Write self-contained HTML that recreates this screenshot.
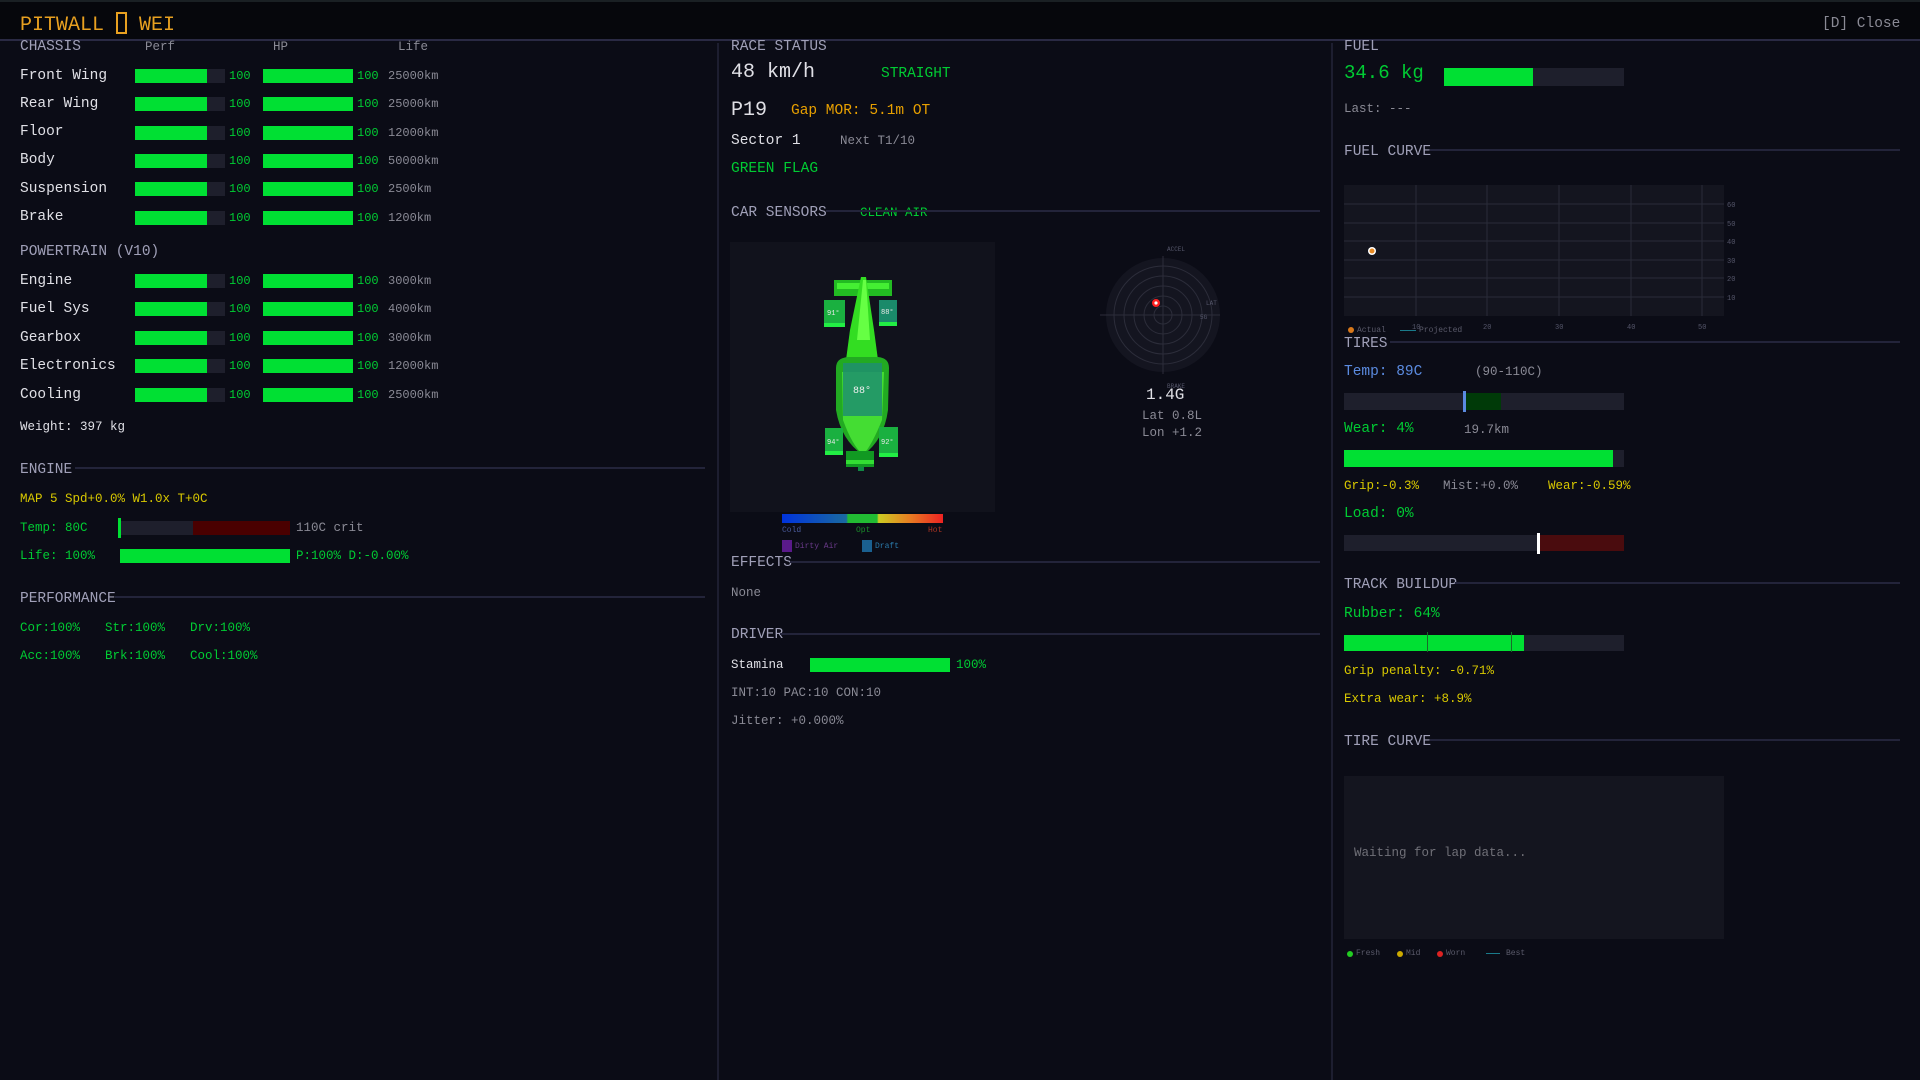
<!DOCTYPE html>
<html><head><meta charset="utf-8"><style>
*{margin:0;padding:0;box-sizing:border-box}
body{width:1920px;height:1080px;background:#0b0c16;font-family:"Liberation Mono",monospace;overflow:hidden;position:relative;color:#d0d0d8}
.t{position:absolute;white-space:nowrap;line-height:1}
.h{color:#a0a0b8;font-size:14.5px}
.g{color:#00cc33}.y{color:#d8c800}.gr{color:#8a8a95}.w{color:#e0e0e6}
.b{position:absolute;background:#1e1f2c}
.f{position:absolute;background:#00e033}
.ln{position:absolute;height:2px;background:#23243a}
</style></head><body>
<div style="position:absolute;left:0;top:0;width:1920px;height:41px;background:#06070c;border-bottom:2px solid #2a2a44"></div>
<div style="position:absolute;left:0;top:0;width:1920px;height:2px;background:#1a2024"></div>
<div class="t" style="left:20px;top:12px;font-size:20px;color:#e8a020">PITWALL <span style="display:inline-block;width:11px;height:22px;border:2px solid #e8a020;vertical-align:-4px"></span> WEI</div>
<div class="t gr" style="left:1822px;top:17px;font-size:14.5px">[D] Close</div>
<div style="position:absolute;left:717px;top:43px;width:2px;height:1037px;background:#1d1e30"></div>
<div style="position:absolute;left:1331px;top:43px;width:2px;height:1037px;background:#1d1e30"></div>

<!-- LEFT -->
<div class="t h" style="left:20px;top:40px">CHASSIS</div>
<div class="t gr" style="left:145px;top:41px;font-size:12.5px">Perf</div>
<div class="t gr" style="left:273px;top:41px;font-size:12.5px">HP</div>
<div class="t gr" style="left:398px;top:41px;font-size:12.5px">Life</div>

<div id="rows"></div>

<div class="t h" style="left:20px;top:245px">POWERTRAIN (V10)</div>
<div class="t w" style="left:20px;top:421px;font-size:12.5px">Weight: 397 kg</div>

<div class="t h" style="left:20px;top:463px">ENGINE</div><div class="ln" style="left:75px;top:467px;width:630px"></div>
<div class="t y" style="left:20px;top:493px;font-size:12.5px">MAP 5  Spd+0.0%  W1.0x  T+0C</div>
<div class="t g" style="left:20px;top:522px;font-size:12.5px">Temp: 80C</div>
<div class="b" style="left:119px;top:521px;width:171px;height:14px"></div>
<div style="position:absolute;left:193px;top:521px;width:97px;height:14px;background:#4a0000"></div>
<div class="f" style="left:118px;top:518px;width:3px;height:20px"></div>
<div class="t gr" style="left:296px;top:522px;font-size:12.5px">110C crit</div>
<div class="t g" style="left:20px;top:550px;font-size:12.5px">Life: 100%</div>
<div class="f" style="left:120px;top:549px;width:170px;height:14px"></div>
<div class="t g" style="left:296px;top:550px;font-size:12.5px">P:100% D:-0.00%</div>

<div class="t h" style="left:20px;top:592px">PERFORMANCE</div><div class="ln" style="left:115px;top:596px;width:590px"></div>
<div class="t g" style="left:20px;top:622px;font-size:12.5px">Cor:100%</div>
<div class="t g" style="left:105px;top:622px;font-size:12.5px">Str:100%</div>
<div class="t g" style="left:190px;top:622px;font-size:12.5px">Drv:100%</div>
<div class="t g" style="left:20px;top:650px;font-size:12.5px">Acc:100%</div>
<div class="t g" style="left:105px;top:650px;font-size:12.5px">Brk:100%</div>
<div class="t g" style="left:190px;top:650px;font-size:12.5px">Cool:100%</div>

<!-- CENTER -->
<div class="t h" style="left:731px;top:40px">RACE STATUS</div>
<div class="t w" style="left:731px;top:63px;font-size:20px">48 km/h</div>
<div class="t g" style="left:881px;top:67px;font-size:14.5px">STRAIGHT</div>
<div class="t w" style="left:731px;top:101px;font-size:20px">P19</div>
<div class="t" style="left:791px;top:104px;font-size:14.5px;color:#e8a000">Gap MOR: 5.1m OT</div>
<div class="t w" style="left:731px;top:134px;font-size:14.5px">Sector 1</div>
<div class="t gr" style="left:840px;top:135px;font-size:12.5px">Next T1/10</div>
<div class="t g" style="left:731px;top:162px;font-size:14.5px">GREEN FLAG</div>
<div class="t h" style="left:731px;top:206px">CAR SENSORS</div>
<div class="t g" style="left:860px;top:207px;font-size:12.5px">CLEAN AIR</div>
<div class="ln" style="left:826px;top:210px;width:494px"></div>

<div style="position:absolute;left:730px;top:242px;width:265px;height:270px;background:#11121c"></div>
<svg style="position:absolute;left:800px;top:260px" width="130" height="220" viewBox="800 260 130 220">
<rect x="834" y="280" width="58" height="16" fill="#22bb22"/>
<rect x="837" y="283" width="52" height="6" fill="#44ee33"/>
<path d="M861 277 L866 277 L874 330 L878 360 L846 360 L850 330 Z" fill="#33dd22"/>
<path d="M863 280 L866 280 L870 340 L857 340 Z" fill="#66ff44"/>
<path d="M836 368 Q836 358 848 357 L878 357 Q889 358 889 368 L888 410 Q884 440 863 455 Q841 440 836 410 Z" fill="#22aa22"/>
<path d="M842 372 L884 372 L882 420 Q872 445 863 455 Q852 445 843 420 Z" fill="#44dd33"/>
<rect x="843" y="363" width="39" height="53" fill="#1f8f6f" opacity="0.85"/>
<rect x="824" y="300" width="21" height="27" fill="#1ab040"/><rect x="824" y="323" width="21" height="4" fill="#22ee44"/>
<rect x="879" y="300" width="18" height="26" fill="#1a8a6a"/><rect x="879" y="322" width="18" height="4" fill="#22ee44"/>
<rect x="825" y="428" width="18" height="27" fill="#1ab040"/><rect x="825" y="451" width="18" height="4" fill="#22ee44"/>
<rect x="879" y="427" width="19" height="30" fill="#1ab040"/><rect x="879" y="453" width="19" height="4" fill="#22ee44"/>
<rect x="846" y="451" width="28" height="16" fill="#119922"/><rect x="846" y="460" width="28" height="4" fill="#33dd33"/>
<rect x="858" y="467" width="6" height="4" fill="#118844"/>
<g font-family="Liberation Mono,monospace" fill="#e8e8e8" font-size="7"><text x="827" y="315">91°</text><text x="881" y="314">88°</text><text x="827" y="444">94°</text><text x="881" y="444">92°</text></g>
<text x="853" y="393" font-family="Liberation Mono,monospace" font-size="10" fill="#eee">88°</text>
</svg>
<svg style="position:absolute;left:1100px;top:240px" width="140" height="150">
<circle cx="63" cy="75" r="57" fill="#141520"/>
<g fill="none" stroke="#2c2d3a" stroke-width="1"><circle cx="63" cy="75" r="49"/><circle cx="63" cy="75" r="39"/><circle cx="63" cy="75" r="29"/><circle cx="63" cy="75" r="19"/><circle cx="63" cy="75" r="9"/><line x1="63" y1="16" x2="63" y2="134"/><line x1="0" y1="75" x2="120" y2="75"/></g>
<circle cx="56" cy="63" r="4" fill="#ff2020"/><circle cx="56" cy="63" r="1.6" fill="#fff"/>
<g font-family="Liberation Mono,monospace" font-size="6" fill="#55566a"><text x="67" y="11">ACCEL</text><text x="67" y="148">BRAKE</text><text x="106" y="65">LAT</text><text x="100" y="79">5G</text></g>
</svg>
<div class="t w" style="left:1146px;top:387px;font-size:16px">1.4G</div>
<div class="t gr" style="left:1142px;top:410px;font-size:12.5px">Lat 0.8L</div>
<div class="t gr" style="left:1142px;top:427px;font-size:12.5px">Lon +1.2</div>
<div style="position:absolute;left:782px;top:514px;width:161px;height:9px;background:linear-gradient(90deg,#0033dd,#1a6aa0 40%,#22bb33 41%,#22bb33 59%,#cccc22 60%,#e87a22 80%,#ee2222)"></div>
<div class="t" style="left:782px;top:527px;font-size:8px;color:#4a5a9a">Cold</div>
<div class="t" style="left:856px;top:527px;font-size:8px;color:#1a8a2a">Opt</div>
<div class="t" style="left:928px;top:527px;font-size:8px;color:#aa3322">Hot</div>
<div style="position:absolute;left:782px;top:540px;width:10px;height:12px;background:#5a1a8a"></div>
<div class="t" style="left:795px;top:543px;font-size:8px;color:#6a3a8a">Dirty Air</div>
<div style="position:absolute;left:862px;top:540px;width:10px;height:12px;background:#1a6090"></div>
<div class="t" style="left:875px;top:543px;font-size:8px;color:#2a7aaa">Draft</div>

<div class="t h" style="left:731px;top:556px">EFFECTS</div><div class="ln" style="left:790px;top:561px;width:530px"></div>
<div class="t gr" style="left:731px;top:587px;font-size:12.5px">None</div>
<div class="t h" style="left:731px;top:628px">DRIVER</div><div class="ln" style="left:780px;top:633px;width:540px"></div>
<div class="t w" style="left:731px;top:659px;font-size:12.5px">Stamina</div>
<div class="f" style="left:810px;top:658px;width:140px;height:14px"></div>
<div class="t g" style="left:956px;top:659px;font-size:12.5px">100%</div>
<div class="t gr" style="left:731px;top:687px;font-size:12.5px">INT:10 PAC:10 CON:10</div>
<div class="t gr" style="left:731px;top:715px;font-size:12.5px">Jitter: +0.000%</div>

<!-- RIGHT -->
<div class="t h" style="left:1344px;top:40px">FUEL</div>
<div class="t g" style="left:1344px;top:64px;font-size:19px">34.6 kg</div>
<div class="b" style="left:1444px;top:68px;width:180px;height:18px"></div>
<div class="f" style="left:1444px;top:68px;width:89px;height:18px"></div>
<div class="t gr" style="left:1344px;top:103px;font-size:12.5px">Last: ---</div>
<div class="t h" style="left:1344px;top:145px">FUEL CURVE</div><div class="ln" style="left:1430px;top:149px;width:470px"></div>
<svg style="position:absolute;left:1344px;top:185px" width="420" height="150">
<rect x="0" y="0" width="380" height="131" fill="#14151f"/>
<g stroke="#2a2b38" stroke-width="1"><line x1="0" y1="19" x2="380" y2="19"/><line x1="0" y1="38" x2="380" y2="38"/><line x1="0" y1="56" x2="380" y2="56"/><line x1="0" y1="75" x2="380" y2="75"/><line x1="0" y1="93" x2="380" y2="93"/><line x1="0" y1="112" x2="380" y2="112"/>
<line x1="72" y1="0" x2="72" y2="131"/><line x1="143" y1="0" x2="143" y2="131"/><line x1="215" y1="0" x2="215" y2="131"/><line x1="287" y1="0" x2="287" y2="131"/><line x1="358" y1="0" x2="358" y2="131"/></g>
<g font-family="Liberation Mono,monospace" font-size="7" fill="#55566a"><text x="383" y="22">60</text><text x="383" y="41">50</text><text x="383" y="59">40</text><text x="383" y="78">30</text><text x="383" y="96">20</text><text x="383" y="115">10</text>
<text x="68" y="144">10</text><text x="139" y="144">20</text><text x="211" y="144">30</text><text x="283" y="144">40</text><text x="354" y="144">50</text></g>
<circle cx="28" cy="66" r="4" fill="#fff"/><circle cx="28" cy="66" r="2.5" fill="#e88a22"/>
</svg>
<div style="position:absolute;left:1348px;top:327px;width:6px;height:6px;border-radius:50%;background:#d8781a"></div>
<div class="t" style="left:1357px;top:327px;font-size:8px;color:#5a5a6a">Actual</div>
<div style="position:absolute;left:1400px;top:330px;width:16px;height:1px;background:#1a7a8a"></div>
<div class="t" style="left:1419px;top:327px;font-size:8px;color:#5a5a6a">Projected</div>

<div class="t h" style="left:1344px;top:337px">TIRES</div><div class="ln" style="left:1390px;top:341px;width:510px"></div>
<div class="t" style="left:1344px;top:365px;font-size:14.5px;color:#5b8be0">Temp: 89C</div>
<div class="t gr" style="left:1475px;top:366px;font-size:12.5px">(90-110C)</div>
<div class="b" style="left:1344px;top:393px;width:280px;height:17px"></div>
<div style="position:absolute;left:1465px;top:393px;width:36px;height:17px;background:#003a08"></div>
<div style="position:absolute;left:1463px;top:391px;width:3px;height:21px;background:#5b8be0"></div>
<div class="t g" style="left:1344px;top:422px;font-size:14.5px">Wear: 4%</div>
<div class="t gr" style="left:1464px;top:424px;font-size:12.5px">19.7km</div>
<div class="b" style="left:1344px;top:450px;width:280px;height:17px"></div>
<div class="f" style="left:1344px;top:450px;width:269px;height:17px"></div>
<div class="t y" style="left:1344px;top:480px;font-size:12.5px">Grip:-0.3%</div>
<div class="t gr" style="left:1443px;top:480px;font-size:12.5px">Mist:+0.0%</div>
<div class="t y" style="left:1548px;top:480px;font-size:12.5px">Wear:-0.59%</div>
<div class="t g" style="left:1344px;top:507px;font-size:14.5px">Load: 0%</div>
<div class="b" style="left:1344px;top:535px;width:280px;height:16px"></div>
<div style="position:absolute;left:1539px;top:535px;width:85px;height:16px;background:#4a0c0e"></div>
<div style="position:absolute;left:1537px;top:533px;width:3px;height:21px;background:#fff"></div>

<div class="t h" style="left:1344px;top:578px">TRACK BUILDUP</div><div class="ln" style="left:1455px;top:582px;width:445px"></div>
<div class="t g" style="left:1344px;top:607px;font-size:14.5px">Rubber: 64%</div>
<div class="b" style="left:1344px;top:635px;width:280px;height:16px"></div>
<div class="f" style="left:1344px;top:635px;width:180px;height:16px"></div>
<div style="position:absolute;left:1427px;top:632px;width:1px;height:20px;background:#1a6a2a"></div>
<div style="position:absolute;left:1511px;top:632px;width:1px;height:20px;background:#1a6a2a"></div>
<div class="t y" style="left:1344px;top:665px;font-size:12.5px">Grip penalty: -0.71%</div>
<div class="t y" style="left:1344px;top:693px;font-size:12.5px">Extra wear: +8.9%</div>

<div class="t h" style="left:1344px;top:735px">TIRE CURVE</div><div class="ln" style="left:1430px;top:739px;width:470px"></div>
<div style="position:absolute;left:1344px;top:776px;width:380px;height:163px;background:#14151f"></div>
<div class="t gr" style="left:1354px;top:847px;font-size:12.5px;color:#707078">Waiting for lap data...</div>
<div style="position:absolute;left:1347px;top:951px;width:6px;height:6px;border-radius:50%;background:#22cc22"></div>
<div class="t" style="left:1356px;top:950px;font-size:8px;color:#5a5a6a">Fresh</div>
<div style="position:absolute;left:1397px;top:951px;width:6px;height:6px;border-radius:50%;background:#ccaa00"></div>
<div class="t" style="left:1406px;top:950px;font-size:8px;color:#5a5a6a">Mid</div>
<div style="position:absolute;left:1437px;top:951px;width:6px;height:6px;border-radius:50%;background:#dd2222"></div>
<div class="t" style="left:1446px;top:950px;font-size:8px;color:#5a5a6a">Worn</div>
<div style="position:absolute;left:1486px;top:953px;width:14px;height:1px;background:#1a7a8a"></div>
<div class="t" style="left:1506px;top:950px;font-size:8px;color:#5a5a6a">Best</div>

<!-- rows -->
<div class="t w" style="left:20px;top:69px;font-size:14.5px">Front Wing</div>
<div class="t w" style="left:20px;top:97px;font-size:14.5px">Rear Wing</div>
<div class="t w" style="left:20px;top:125px;font-size:14.5px">Floor</div>
<div class="t w" style="left:20px;top:153px;font-size:14.5px">Body</div>
<div class="t w" style="left:20px;top:182px;font-size:14.5px">Suspension</div>
<div class="t w" style="left:20px;top:210px;font-size:14.5px">Brake</div>
<div class="t w" style="left:20px;top:274px;font-size:14.5px">Engine</div>
<div class="t w" style="left:20px;top:302px;font-size:14.5px">Fuel Sys</div>
<div class="t w" style="left:20px;top:331px;font-size:14.5px">Gearbox</div>
<div class="t w" style="left:20px;top:359px;font-size:14.5px">Electronics</div>
<div class="t w" style="left:20px;top:388px;font-size:14.5px">Cooling</div>

<div style="position:absolute;left:0;top:0">
<!-- bars generated statically -->
</div>
<style>
.r{position:absolute;left:0;width:460px;height:14px}
.r .p{position:absolute;left:135px;top:0;width:90px;height:14px;background:#1e1f2c}
.r .p:after{content:"";position:absolute;left:0;top:0;width:72px;height:14px;background:#00e033}
.r .q{position:absolute;left:263px;top:0;width:90px;height:14px;background:#00e033}
.r .v1,.r .v2,.r .l{position:absolute;top:1px;font-size:12px;line-height:1;white-space:nowrap}
.r .v1{left:229px;color:#00cc33}.r .v2{left:357px;color:#00cc33}.r .l{left:388px;color:#8a8a95}
</style>
<div class="r" style="top:69px"><i class="p"></i><i class="q"></i><span class="v1">100</span><span class="v2">100</span><span class="l">25000km</span></div>
<div class="r" style="top:97px"><i class="p"></i><i class="q"></i><span class="v1">100</span><span class="v2">100</span><span class="l">25000km</span></div>
<div class="r" style="top:126px"><i class="p"></i><i class="q"></i><span class="v1">100</span><span class="v2">100</span><span class="l">12000km</span></div>
<div class="r" style="top:154px"><i class="p"></i><i class="q"></i><span class="v1">100</span><span class="v2">100</span><span class="l">50000km</span></div>
<div class="r" style="top:182px"><i class="p"></i><i class="q"></i><span class="v1">100</span><span class="v2">100</span><span class="l">2500km</span></div>
<div class="r" style="top:211px"><i class="p"></i><i class="q"></i><span class="v1">100</span><span class="v2">100</span><span class="l">1200km</span></div>
<div class="r" style="top:274px"><i class="p"></i><i class="q"></i><span class="v1">100</span><span class="v2">100</span><span class="l">3000km</span></div>
<div class="r" style="top:302px"><i class="p"></i><i class="q"></i><span class="v1">100</span><span class="v2">100</span><span class="l">4000km</span></div>
<div class="r" style="top:331px"><i class="p"></i><i class="q"></i><span class="v1">100</span><span class="v2">100</span><span class="l">3000km</span></div>
<div class="r" style="top:359px"><i class="p"></i><i class="q"></i><span class="v1">100</span><span class="v2">100</span><span class="l">12000km</span></div>
<div class="r" style="top:388px"><i class="p"></i><i class="q"></i><span class="v1">100</span><span class="v2">100</span><span class="l">25000km</span></div>
</body></html>
